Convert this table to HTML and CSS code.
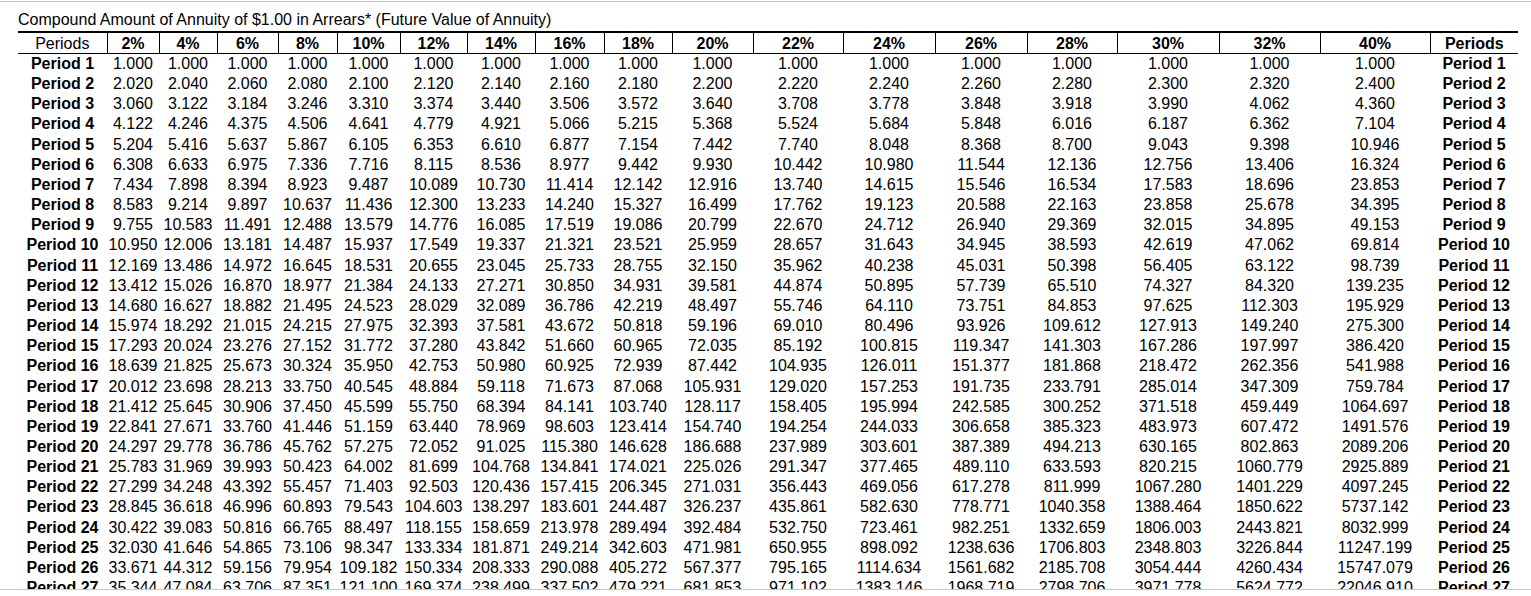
FILE: index.html
```html
<!DOCTYPE html>
<html lang="en">
<head>
<meta charset="utf-8">
<title>Compound Amount of Annuity</title>
<link rel="stylesheet" href="styles.css">
</head>
<body>
<div class="frame">
  <div class="title">Compound Amount of Annuity of $1.00 in Arrears* (Future Value of Annuity)</div>
  <table class="annuity">
    <colgroup>
      <col class="c89"><col class="c52"><col class="c58"><col class="c61"><col class="c59"><col class="c63"><col class="c67"><col class="c68"><col class="c69"><col class="c68"><col class="c81"><col class="c90"><col class="c92"><col class="c92"><col class="c90"><col class="c102"><col class="c101"><col class="c110"><col class="c88">
    </colgroup>
    <thead>
      <tr><th class="plain">Periods</th><th>2%</th><th>4%</th><th>6%</th><th>8%</th><th>10%</th><th>12%</th><th>14%</th><th>16%</th><th>18%</th><th>20%</th><th>22%</th><th>24%</th><th>26%</th><th>28%</th><th>30%</th><th>32%</th><th>40%</th><th>Periods</th></tr>
    </thead>
    <tbody>
      <tr><th>Period 1</th><td>1.000</td><td>1.000</td><td>1.000</td><td>1.000</td><td>1.000</td><td>1.000</td><td>1.000</td><td>1.000</td><td>1.000</td><td>1.000</td><td>1.000</td><td>1.000</td><td>1.000</td><td>1.000</td><td>1.000</td><td>1.000</td><td>1.000</td><th>Period 1</th></tr>
      <tr><th>Period 2</th><td>2.020</td><td>2.040</td><td>2.060</td><td>2.080</td><td>2.100</td><td>2.120</td><td>2.140</td><td>2.160</td><td>2.180</td><td>2.200</td><td>2.220</td><td>2.240</td><td>2.260</td><td>2.280</td><td>2.300</td><td>2.320</td><td>2.400</td><th>Period 2</th></tr>
      <tr><th>Period 3</th><td>3.060</td><td>3.122</td><td>3.184</td><td>3.246</td><td>3.310</td><td>3.374</td><td>3.440</td><td>3.506</td><td>3.572</td><td>3.640</td><td>3.708</td><td>3.778</td><td>3.848</td><td>3.918</td><td>3.990</td><td>4.062</td><td>4.360</td><th>Period 3</th></tr>
      <tr><th>Period 4</th><td>4.122</td><td>4.246</td><td>4.375</td><td>4.506</td><td>4.641</td><td>4.779</td><td>4.921</td><td>5.066</td><td>5.215</td><td>5.368</td><td>5.524</td><td>5.684</td><td>5.848</td><td>6.016</td><td>6.187</td><td>6.362</td><td>7.104</td><th>Period 4</th></tr>
      <tr><th>Period 5</th><td>5.204</td><td>5.416</td><td>5.637</td><td>5.867</td><td>6.105</td><td>6.353</td><td>6.610</td><td>6.877</td><td>7.154</td><td>7.442</td><td>7.740</td><td>8.048</td><td>8.368</td><td>8.700</td><td>9.043</td><td>9.398</td><td>10.946</td><th>Period 5</th></tr>
      <tr><th>Period 6</th><td>6.308</td><td>6.633</td><td>6.975</td><td>7.336</td><td>7.716</td><td>8.115</td><td>8.536</td><td>8.977</td><td>9.442</td><td>9.930</td><td>10.442</td><td>10.980</td><td>11.544</td><td>12.136</td><td>12.756</td><td>13.406</td><td>16.324</td><th>Period 6</th></tr>
      <tr><th>Period 7</th><td>7.434</td><td>7.898</td><td>8.394</td><td>8.923</td><td>9.487</td><td>10.089</td><td>10.730</td><td>11.414</td><td>12.142</td><td>12.916</td><td>13.740</td><td>14.615</td><td>15.546</td><td>16.534</td><td>17.583</td><td>18.696</td><td>23.853</td><th>Period 7</th></tr>
      <tr><th>Period 8</th><td>8.583</td><td>9.214</td><td>9.897</td><td>10.637</td><td>11.436</td><td>12.300</td><td>13.233</td><td>14.240</td><td>15.327</td><td>16.499</td><td>17.762</td><td>19.123</td><td>20.588</td><td>22.163</td><td>23.858</td><td>25.678</td><td>34.395</td><th>Period 8</th></tr>
      <tr><th>Period 9</th><td>9.755</td><td>10.583</td><td>11.491</td><td>12.488</td><td>13.579</td><td>14.776</td><td>16.085</td><td>17.519</td><td>19.086</td><td>20.799</td><td>22.670</td><td>24.712</td><td>26.940</td><td>29.369</td><td>32.015</td><td>34.895</td><td>49.153</td><th>Period 9</th></tr>
      <tr><th>Period 10</th><td>10.950</td><td>12.006</td><td>13.181</td><td>14.487</td><td>15.937</td><td>17.549</td><td>19.337</td><td>21.321</td><td>23.521</td><td>25.959</td><td>28.657</td><td>31.643</td><td>34.945</td><td>38.593</td><td>42.619</td><td>47.062</td><td>69.814</td><th>Period 10</th></tr>
      <tr><th>Period 11</th><td>12.169</td><td>13.486</td><td>14.972</td><td>16.645</td><td>18.531</td><td>20.655</td><td>23.045</td><td>25.733</td><td>28.755</td><td>32.150</td><td>35.962</td><td>40.238</td><td>45.031</td><td>50.398</td><td>56.405</td><td>63.122</td><td>98.739</td><th>Period 11</th></tr>
      <tr><th>Period 12</th><td>13.412</td><td>15.026</td><td>16.870</td><td>18.977</td><td>21.384</td><td>24.133</td><td>27.271</td><td>30.850</td><td>34.931</td><td>39.581</td><td>44.874</td><td>50.895</td><td>57.739</td><td>65.510</td><td>74.327</td><td>84.320</td><td>139.235</td><th>Period 12</th></tr>
      <tr><th>Period 13</th><td>14.680</td><td>16.627</td><td>18.882</td><td>21.495</td><td>24.523</td><td>28.029</td><td>32.089</td><td>36.786</td><td>42.219</td><td>48.497</td><td>55.746</td><td>64.110</td><td>73.751</td><td>84.853</td><td>97.625</td><td>112.303</td><td>195.929</td><th>Period 13</th></tr>
      <tr><th>Period 14</th><td>15.974</td><td>18.292</td><td>21.015</td><td>24.215</td><td>27.975</td><td>32.393</td><td>37.581</td><td>43.672</td><td>50.818</td><td>59.196</td><td>69.010</td><td>80.496</td><td>93.926</td><td>109.612</td><td>127.913</td><td>149.240</td><td>275.300</td><th>Period 14</th></tr>
      <tr><th>Period 15</th><td>17.293</td><td>20.024</td><td>23.276</td><td>27.152</td><td>31.772</td><td>37.280</td><td>43.842</td><td>51.660</td><td>60.965</td><td>72.035</td><td>85.192</td><td>100.815</td><td>119.347</td><td>141.303</td><td>167.286</td><td>197.997</td><td>386.420</td><th>Period 15</th></tr>
      <tr><th>Period 16</th><td>18.639</td><td>21.825</td><td>25.673</td><td>30.324</td><td>35.950</td><td>42.753</td><td>50.980</td><td>60.925</td><td>72.939</td><td>87.442</td><td>104.935</td><td>126.011</td><td>151.377</td><td>181.868</td><td>218.472</td><td>262.356</td><td>541.988</td><th>Period 16</th></tr>
      <tr><th>Period 17</th><td>20.012</td><td>23.698</td><td>28.213</td><td>33.750</td><td>40.545</td><td>48.884</td><td>59.118</td><td>71.673</td><td>87.068</td><td>105.931</td><td>129.020</td><td>157.253</td><td>191.735</td><td>233.791</td><td>285.014</td><td>347.309</td><td>759.784</td><th>Period 17</th></tr>
      <tr><th>Period 18</th><td>21.412</td><td>25.645</td><td>30.906</td><td>37.450</td><td>45.599</td><td>55.750</td><td>68.394</td><td>84.141</td><td>103.740</td><td>128.117</td><td>158.405</td><td>195.994</td><td>242.585</td><td>300.252</td><td>371.518</td><td>459.449</td><td>1064.697</td><th>Period 18</th></tr>
      <tr><th>Period 19</th><td>22.841</td><td>27.671</td><td>33.760</td><td>41.446</td><td>51.159</td><td>63.440</td><td>78.969</td><td>98.603</td><td>123.414</td><td>154.740</td><td>194.254</td><td>244.033</td><td>306.658</td><td>385.323</td><td>483.973</td><td>607.472</td><td>1491.576</td><th>Period 19</th></tr>
      <tr><th>Period 20</th><td>24.297</td><td>29.778</td><td>36.786</td><td>45.762</td><td>57.275</td><td>72.052</td><td>91.025</td><td>115.380</td><td>146.628</td><td>186.688</td><td>237.989</td><td>303.601</td><td>387.389</td><td>494.213</td><td>630.165</td><td>802.863</td><td>2089.206</td><th>Period 20</th></tr>
      <tr><th>Period 21</th><td>25.783</td><td>31.969</td><td>39.993</td><td>50.423</td><td>64.002</td><td>81.699</td><td>104.768</td><td>134.841</td><td>174.021</td><td>225.026</td><td>291.347</td><td>377.465</td><td>489.110</td><td>633.593</td><td>820.215</td><td>1060.779</td><td>2925.889</td><th>Period 21</th></tr>
      <tr><th>Period 22</th><td>27.299</td><td>34.248</td><td>43.392</td><td>55.457</td><td>71.403</td><td>92.503</td><td>120.436</td><td>157.415</td><td>206.345</td><td>271.031</td><td>356.443</td><td>469.056</td><td>617.278</td><td>811.999</td><td>1067.280</td><td>1401.229</td><td>4097.245</td><th>Period 22</th></tr>
      <tr><th>Period 23</th><td>28.845</td><td>36.618</td><td>46.996</td><td>60.893</td><td>79.543</td><td>104.603</td><td>138.297</td><td>183.601</td><td>244.487</td><td>326.237</td><td>435.861</td><td>582.630</td><td>778.771</td><td>1040.358</td><td>1388.464</td><td>1850.622</td><td>5737.142</td><th>Period 23</th></tr>
      <tr><th>Period 24</th><td>30.422</td><td>39.083</td><td>50.816</td><td>66.765</td><td>88.497</td><td>118.155</td><td>158.659</td><td>213.978</td><td>289.494</td><td>392.484</td><td>532.750</td><td>723.461</td><td>982.251</td><td>1332.659</td><td>1806.003</td><td>2443.821</td><td>8032.999</td><th>Period 24</th></tr>
      <tr><th>Period 25</th><td>32.030</td><td>41.646</td><td>54.865</td><td>73.106</td><td>98.347</td><td>133.334</td><td>181.871</td><td>249.214</td><td>342.603</td><td>471.981</td><td>650.955</td><td>898.092</td><td>1238.636</td><td>1706.803</td><td>2348.803</td><td>3226.844</td><td>11247.199</td><th>Period 25</th></tr>
      <tr><th>Period 26</th><td>33.671</td><td>44.312</td><td>59.156</td><td>79.954</td><td>109.182</td><td>150.334</td><td>208.333</td><td>290.088</td><td>405.272</td><td>567.377</td><td>795.165</td><td>1114.634</td><td>1561.682</td><td>2185.708</td><td>3054.444</td><td>4260.434</td><td>15747.079</td><th>Period 26</th></tr>
      <tr><th>Period 27</th><td>35.344</td><td>47.084</td><td>63.706</td><td>87.351</td><td>121.100</td><td>169.374</td><td>238.499</td><td>337.502</td><td>479.221</td><td>681.853</td><td>971.102</td><td>1383.146</td><td>1968.719</td><td>2798.706</td><td>3971.778</td><td>5624.772</td><td>22046.910</td><th>Period 27</th></tr>
    </tbody>
  </table>
</div>
</body>
</html>
```

FILE: styles.css
```css
html, body {
  margin: 0;
  padding: 0;
  background: #fff;
}

body {
  padding-top: 1px;
  font-family: "Liberation Sans", Arial, sans-serif;
  font-size: 16px;
  color: #000;
}

.frame {
  box-sizing: border-box;
  height: 589px;
  border-top: 1px solid #c8c8c8;
  border-bottom: 1px solid #c8c8c8;
  overflow: hidden;
  padding: 9px 0 0 18px;
}

.title {
  line-height: 18px;
  white-space: nowrap;
}

.annuity {
  margin-top: 2px;
  border-collapse: collapse;
  table-layout: fixed;
  width: 1500px;
}

.annuity th,
.annuity td {
  padding: 1px 0;
  text-align: center;
  white-space: nowrap;
  line-height: 18.16px;
}

.annuity th {
  font-weight: bold;
}

.annuity thead th {
  border-top: 2px solid #000;
  border-bottom: 1px solid #000;
  padding: 2px 0 0;
  line-height: 18px;
}

.annuity thead th + th {
  border-left: 1px solid #000;
}

.annuity thead th.plain {
  font-weight: normal;
}

.c52 { width: 52px; }
.c58 { width: 58px; }
.c59 { width: 59px; }
.c61 { width: 61px; }
.c63 { width: 63px; }
.c67 { width: 67px; }
.c68 { width: 68px; }
.c69 { width: 69px; }
.c81 { width: 81px; }
.c88 { width: 88px; }
.c89 { width: 89px; }
.c90 { width: 90px; }
.c92 { width: 92px; }
.c101 { width: 101px; }
.c102 { width: 102px; }
.c110 { width: 110px; }
```
